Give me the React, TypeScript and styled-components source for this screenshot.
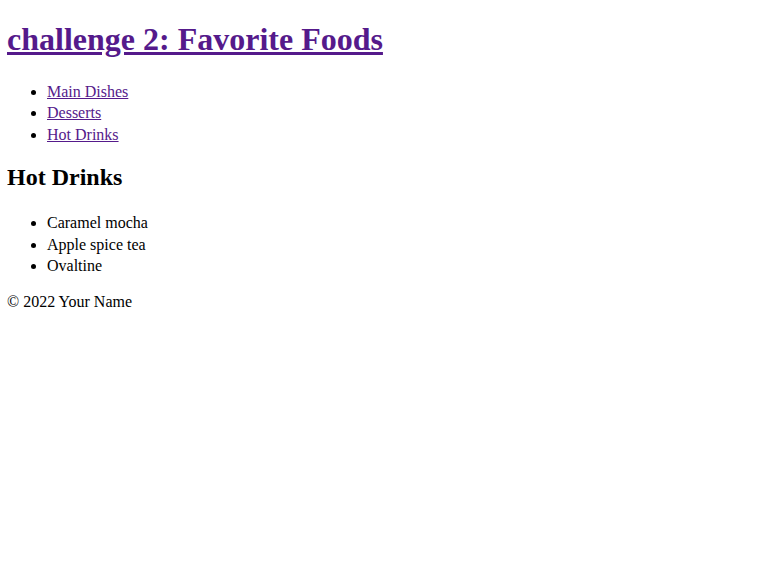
import React from "react";
import styled, { createGlobalStyle } from "styled-components";

const Global = createGlobalStyle`
  body {
    margin: 8px 8px 8px 7px;
    font-family: "Liberation Serif", "Times New Roman", serif;
    font-size: 16px;
    color: #000;
    background: #fff;
  }
`;

const Title = styled.h1`
  font-size: 32px;
  font-weight: bold;
  margin: 12.94px 0 22.94px;
  line-height: 37px;
`;

const Link = styled.a`
  color: #551a8b;
  text-decoration: underline;
`;

const List = styled.ul<{ $bottom?: number }>`
  margin: 16px 0 ${(p) => (p.$bottom ?? 16)}px;
  padding-left: 40px;
  list-style: disc;
`;

const Item = styled.li`
  line-height: 21.4px;
`;

const Heading = styled.h2`
  font-size: 24px;
  font-weight: bold;
  margin: 17.42px 0 21.92px;
  line-height: 28px;
`;

const Footer = styled.footer`
  margin: 14px 0 16px;
  line-height: 21.3px;
`;

export default function App() {
  return (
    <>
      <Global />
      <header>
        <Title>
          <Link href="#">challenge 2: Favorite Foods</Link>
        </Title>
      </header>
      <nav>
        <List>
          <Item><Link href="#">Main Dishes</Link></Item>
          <Item><Link href="#">Desserts</Link></Item>
          <Item><Link href="#">Hot Drinks</Link></Item>
        </List>
      </nav>
      <main>
        <Heading>Hot Drinks</Heading>
        <List $bottom={0}>
          <Item>Caramel mocha</Item>
          <Item>Apple spice tea</Item>
          <Item>Ovaltine</Item>
        </List>
      </main>
      <Footer>© 2022 Your Name</Footer>
    </>
  );
}
